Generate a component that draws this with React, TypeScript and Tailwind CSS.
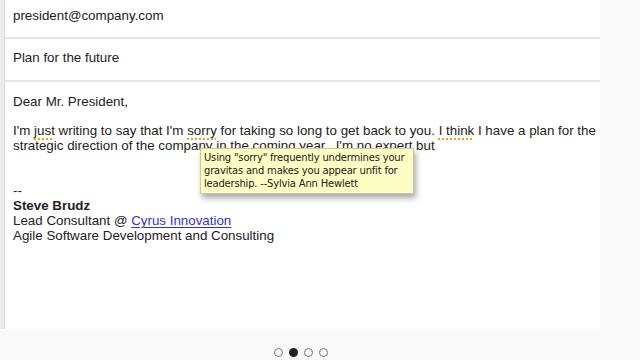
import React from "react";

const Mark = ({ children }: { children: React.ReactNode }) => (
  <span className="underline decoration-dotted decoration-[#f0a020] decoration-2 underline-offset-[3px]">
    {children}
  </span>
);

export default function App() {
  return (
    <div
      className="w-[640px] h-[360px] bg-[#f9f9f9] flex flex-col overflow-hidden text-[#222]"
      style={{ fontFamily: '"Liberation Sans", Arial, sans-serif' }}
    >
      <div className="flex h-[329px]">
        <div className="w-[5px] bg-[#ebebeb] border-r border-[#dcdcdc]" />
        <div className="w-[595px] bg-white flex flex-col relative text-[13.35px] leading-[15px]">
          <div className="h-[37px] pl-[8px] pt-[8px]">president@company.com</div>
          <div className="h-[2px] bg-[#e4e4e4]" />
          <div className="h-[41px] pl-[8px] pt-[11px]">Plan for the future</div>
          <div className="h-[2px] bg-[#e4e4e4]" />
          <div className="pl-[8px] pt-[12px] whitespace-pre">
            <div>Dear Mr. President,</div>
            <div className="mt-[14px]">
              I'm <Mark>just</Mark> writing to say that I'm <Mark>sorry</Mark> for taking so long to get back to you.{" "}
              <Mark>I think</Mark> I have a plan for the
            </div>
            <div>
              strategic direction of the company in the coming year.  I'm no <Mark>expert</Mark> but
            </div>
            <div className="mt-[30px] leading-[15px]">--</div>
            <div className="font-bold">Steve Brudz</div>
            <div>
              Lead Consultant @ <span className="text-[#3434cc] underline underline-offset-[2px]">Cyrus Innovation</span>
            </div>
            <div>Agile Software Development and Consulting</div>
          </div>

          <div
            className="absolute left-[195px] top-[148px] w-[214px] h-[46px] bg-[#fdfdc4] border border-[#c9c9a0] shadow-[2px_4px_6px_rgba(0,0,0,0.35)] px-[3px] pt-[2px] text-[10px] leading-[13px] tracking-[-0.2px] whitespace-nowrap text-[#222]"
            style={{ fontFamily: '"DejaVu Sans", Verdana, sans-serif' }}
          >
            <div>Using "sorry" frequently undermines your</div>
            <div>gravitas and makes you appear unfit for</div>
            <div>leadership. --Sylvia Ann Hewlett</div>
          </div>
        </div>
      </div>
      <div className="flex-1 flex items-end pb-[3px]">
        <div className="w-[600px] flex justify-center">
          <div className="flex gap-[6px] ml-[2px]">
            <span className="w-[9px] h-[9px] rounded-full border-[1.5px] border-[#777]" />
            <span className="w-[9px] h-[9px] rounded-full bg-[#222]" />
            <span className="w-[9px] h-[9px] rounded-full border-[1.5px] border-[#777]" />
            <span className="w-[9px] h-[9px] rounded-full border-[1.5px] border-[#777]" />
          </div>
        </div>
      </div>
    </div>
  );
}
